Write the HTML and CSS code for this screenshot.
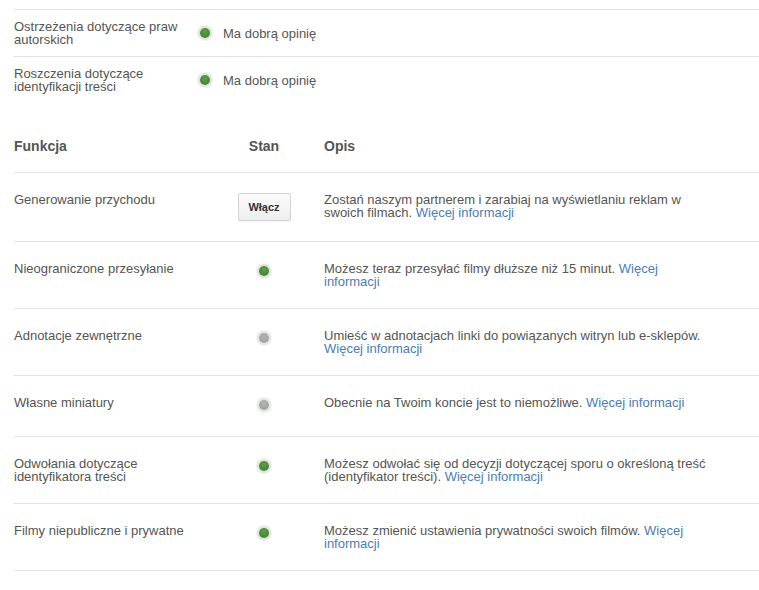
FILE: index.html
```html
<!DOCTYPE html>
<html lang="pl">
<head>
<meta charset="utf-8">
<title>Funkcje konta</title>
<link rel="stylesheet" href="styles.css">
</head>
<body>
<div class="page">
  <div class="status-list">
    <div class="status-row">
      <div class="status-label">Ostrzeżenia dotyczące praw autorskich</div>
      <span class="dot dot-on"></span>
      <span class="status-text">Ma dobrą opinię</span>
    </div>
    <div class="status-row">
      <div class="status-label">Roszczenia dotyczące identyfikacji treści</div>
      <span class="dot dot-on"></span>
      <span class="status-text">Ma dobrą opinię</span>
    </div>
  </div>

  <div class="features">
    <div class="frow fhead">
      <div class="c-name">Funkcja</div>
      <div class="c-state">Stan</div>
      <div class="c-desc">Opis</div>
    </div>
    <div class="frow">
      <div class="c-name">Generowanie przychodu</div>
      <div class="c-state"><button class="btn" type="button">Włącz</button></div>
      <div class="c-desc">Zostań naszym partnerem i zarabiaj na wyświetlaniu reklam w swoich filmach. <a href="#">Więcej informacji</a></div>
    </div>
    <div class="frow">
      <div class="c-name">Nieograniczone przesyłanie</div>
      <div class="c-state"><span class="dotbox"><span class="dot dot-on"></span></span></div>
      <div class="c-desc">Możesz teraz przesyłać filmy dłuższe niż 15 minut. <a href="#">Więcej informacji</a></div>
    </div>
    <div class="frow">
      <div class="c-name">Adnotacje zewnętrzne</div>
      <div class="c-state"><span class="dotbox"><span class="dot dot-off"></span></span></div>
      <div class="c-desc">Umieść w adnotacjach linki do powiązanych witryn lub e-sklepów. <a href="#">Więcej informacji</a></div>
    </div>
    <div class="frow">
      <div class="c-name">Własne miniatury</div>
      <div class="c-state"><span class="dotbox"><span class="dot dot-off"></span></span></div>
      <div class="c-desc">Obecnie na Twoim koncie jest to niemożliwe. <a href="#">Więcej informacji</a></div>
    </div>
    <div class="frow">
      <div class="c-name">Odwołania dotyczące identyfikatora treści</div>
      <div class="c-state"><span class="dotbox"><span class="dot dot-on"></span></span></div>
      <div class="c-desc">Możesz odwołać się od decyzji dotyczącej sporu o określoną treść (identyfikator treści). <a href="#">Więcej informacji</a></div>
    </div>
    <div class="frow">
      <div class="c-name">Filmy niepubliczne i prywatne</div>
      <div class="c-state"><span class="dotbox"><span class="dot dot-on"></span></span></div>
      <div class="c-desc">Możesz zmienić ustawienia prywatności swoich filmów. <a href="#">Więcej informacji</a></div>
    </div>
  </div>
</div>
</body>
</html>
```

FILE: styles.css
```css
html, body {
  margin: 0;
  padding: 0;
  background: #ffffff;
}

body {
  font-family: "Liberation Sans", Arial, sans-serif;
  font-size: 13px;
  line-height: 13px;
  color: #555555;
}

.page {
  padding: 9px 0 0 14px;
}

.status-row {
  display: flex;
  align-items: center;
  border-top: 1px solid #e3e3e3;
  padding: 10px 0;
}

.status-label {
  width: 176px;
  flex: none;
}

.status-row .dot {
  margin: 0 13px 0 10px;
}

.dot {
  display: inline-block;
  width: 10px;
  height: 10px;
  border-radius: 50%;
  flex: none;
}

.dot-on {
  background: radial-gradient(circle at 50% 35%, #5e9f4a 0%, #4a8a39 55%, #3b7a2e 100%);
  box-shadow: 0 0 0 2px #e2e4e0, 0 0 0 3px #f1f2f0;
}

.dot-off {
  background: radial-gradient(circle at 50% 35%, #b0b4ae 0%, #a3a7a1 60%, #979b95 100%);
  box-shadow: 0 0 0 2px #e6e6e6, 0 0 0 3px #f3f3f3;
}

.features {
  margin-top: 36px;
}

.frow {
  display: grid;
  grid-template-columns: 210px 80px 1fr;
  border-bottom: 1px solid #e3e3e3;
  padding: 20px 0;
}

.fhead {
  padding: 0 0 19px;
  font-weight: bold;
  font-size: 14px;
  line-height: 14px;
  color: #555555;
}

.c-name {
  padding-right: 14px;
}

.c-state {
  display: flex;
  justify-content: center;
  align-items: flex-start;
}

.c-desc {
  padding: 0 47px 0 20px;
}

.dotbox {
  display: block;
  height: 20px;
  padding-top: 3px;
  box-sizing: border-box;
}

.btn {
  width: 53px;
  height: 28px;
  padding: 0;
  border: 1px solid #d3d3d3;
  border-radius: 2px;
  background: linear-gradient(#fcfcfc, #eeeeee);
  font-family: "Liberation Sans", Arial, sans-serif;
  font-size: 11px;
  font-weight: bold;
  color: #333333;
  box-shadow: 0 1px 0 rgba(0, 0, 0, 0.04);
}

a {
  color: #4b7cb8;
  text-decoration: none;
}
```
